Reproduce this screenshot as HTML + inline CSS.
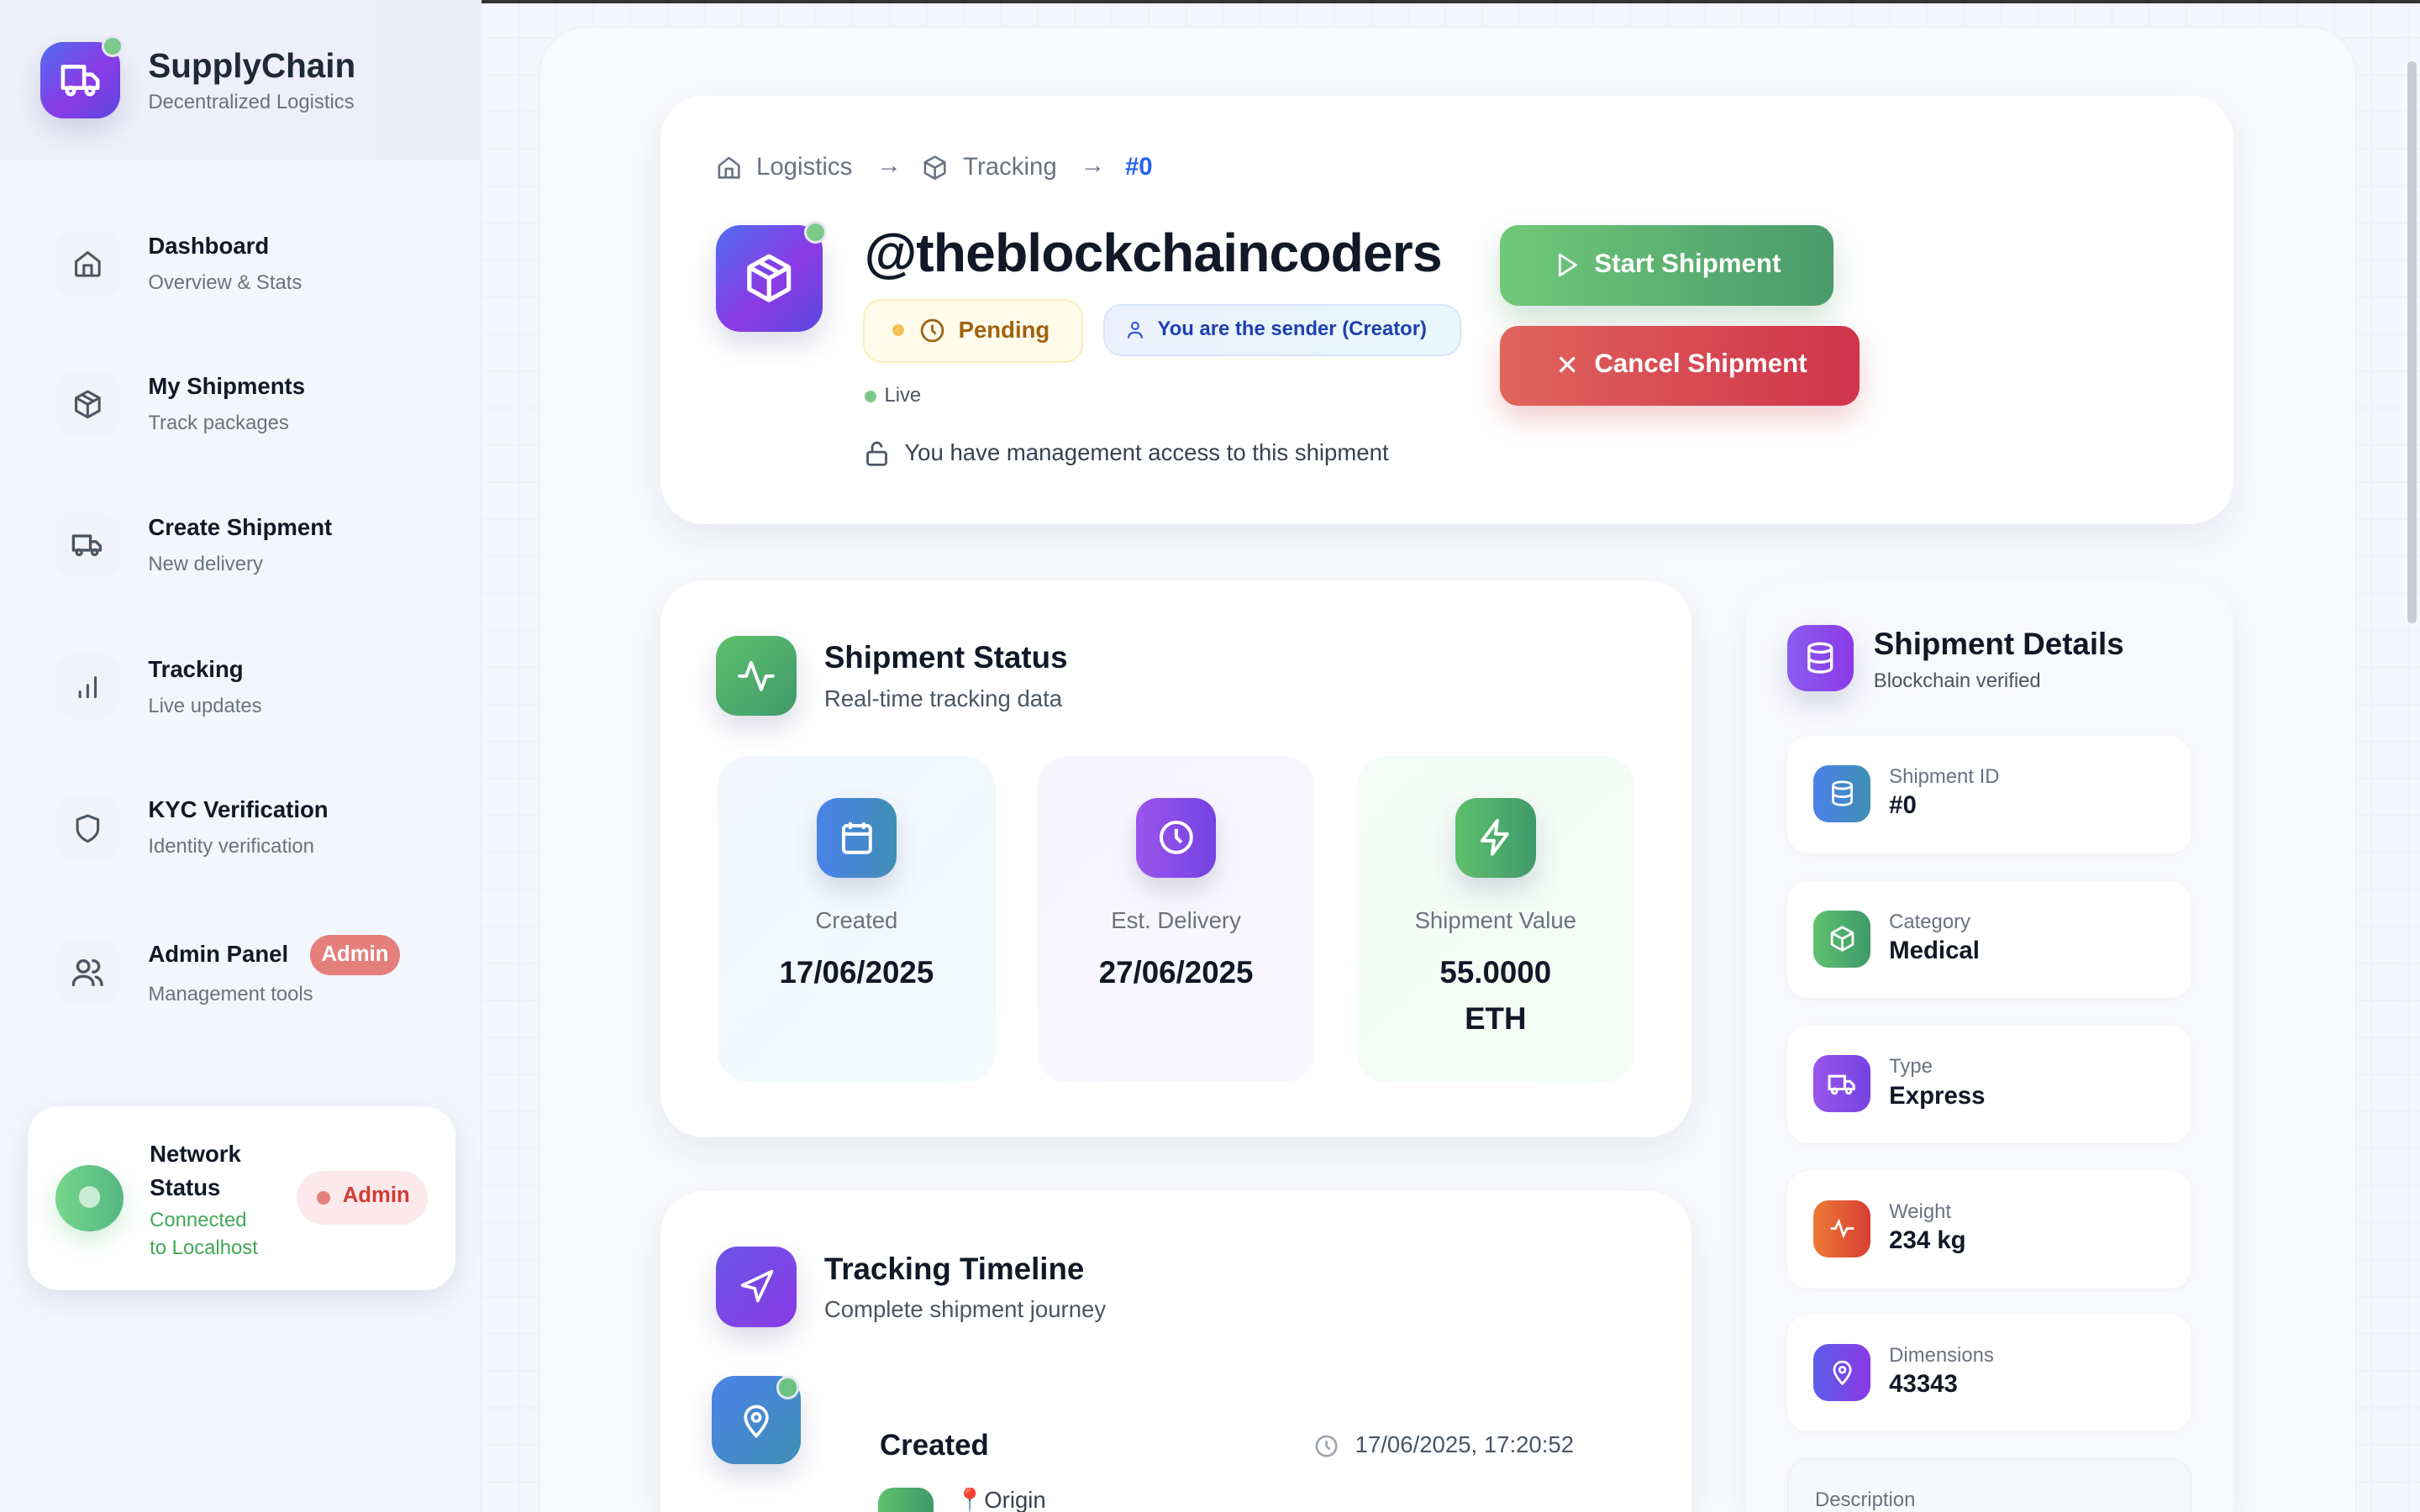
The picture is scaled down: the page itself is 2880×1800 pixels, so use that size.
<!DOCTYPE html>
<html><head><meta charset="utf-8"><style>
*{box-sizing:border-box;margin:0;padding:0}
html,body{width:1568px;height:980px;overflow:hidden}
body{zoom:1.836735;font-family:"Liberation Sans",sans-serif;background:#f5f7fc;position:relative;color:#111827}
.a{position:absolute}
.sb{left:0;top:0;width:312px;height:980px;background:#f3f6fc;border-right:1px solid #e3e8f3}
.sbh{left:0;top:0;width:312px;height:104px;background:linear-gradient(90deg,#eef1fb,#eeeefb)}
.ib{width:42px;height:42px;border-radius:12px;background:#f0f3f9;display:flex;align-items:center;justify-content:center}
.t{font-weight:bold;font-size:15px;color:#111827}
.s{font-size:13px;color:#6b7280}
.card{background:#fff;border-radius:28px;box-shadow:0 8px 24px rgba(30,40,80,.08)}
svg{display:block}
.grad{display:flex;align-items:center;justify-content:center;box-shadow:0 8px 16px rgba(60,60,120,.18)}
.det{left:1158px;width:262px;height:76px;background:#fff;border-radius:14px;box-shadow:0 1px 4px rgba(0,0,0,.03)}
.det .grad{position:absolute;left:17px;top:19px;width:37px;height:37px;border-radius:10px;box-shadow:none}
.det .l{position:absolute;left:66px;top:19px;font-size:13px;color:#6b7280}
.det .v{position:absolute;left:66px;top:36px;font-size:16px;font-weight:bold;color:#111827}
.stat{top:490px;width:180px;height:211px;border-radius:20px;text-align:center}
.stat .grad{position:absolute;left:64px;top:27px;width:52px;height:52px;border-radius:14px}
.stat .l{position:absolute;left:0;right:0;top:98px;font-size:15px;color:#6b7280}
.stat .v{position:absolute;left:0;right:0;top:125px;font-size:20px;font-weight:bold;line-height:30px}
</style></head><body>
<div class="a" style="left:312px;top:0;width:1256px;height:980px;background-image:linear-gradient(#f0f2f8 1px,transparent 1px),linear-gradient(90deg,#f0f2f8 1px,transparent 1px);background-size:24px 24px"></div>
<div class="a" style="left:0;top:0;width:1568px;height:2px;background:#333"></div>

<div class="a sb"></div>
<div class="a sbh"></div>
<div class="a grad" style="left:26px;top:27px;width:52px;height:50px;border-radius:15px;background:linear-gradient(135deg,#4f6ef0,#8b3ae6 55%,#5a48e0)">
<svg width="30" height="30" viewBox="0 0 24 24" fill="none" stroke="#fff" stroke-width="2" stroke-linecap="round" stroke-linejoin="round"><path d="M3 5h11v11H3zM14 9h4l3 3v4h-7"/><circle cx="7" cy="17.5" r="1.8"/><circle cx="17" cy="17.5" r="1.8"/></svg></div>
<div class="a" style="left:66px;top:23px;width:14px;height:14px;border-radius:50%;background:#7cc98a;border:2px solid #e6e8f6"></div>
<div class="a" style="left:96px;top:30px;font-size:22px;font-weight:bold;color:#1f2937">SupplyChain</div>
<div class="a" style="left:96px;top:59px;font-size:13px;color:#6b7280">Decentralized Logistics</div>

<div class="a ib" style="left:36px;top:150px"><svg width="20" height="20" viewBox="0 0 24 24" fill="none" stroke="#4b5563" stroke-width="2" stroke-linejoin="round"><path d="M3 10l9-7 9 7v10a1 1 0 0 1-1 1H4a1 1 0 0 1-1-1z"/><path d="M9 21v-8h6v8"/></svg></div>
<div class="a t" style="left:96px;top:151px">Dashboard</div><div class="a s" style="left:96px;top:176px">Overview &amp; Stats</div>
<div class="a ib" style="left:36px;top:241px"><svg width="20" height="20" viewBox="0 0 24 24" fill="none" stroke="#4b5563" stroke-width="2" stroke-linejoin="round"><path d="M12 2l9 5v10l-9 5-9-5V7z"/><path d="M3 7l9 5 9-5M12 12v10M7.5 4.5l9 5"/></svg></div>
<div class="a t" style="left:96px;top:242px">My Shipments</div><div class="a s" style="left:96px;top:267px">Track packages</div>
<div class="a ib" style="left:36px;top:332px"><svg width="22" height="22" viewBox="0 0 24 24" fill="none" stroke="#4b5563" stroke-width="2" stroke-linejoin="round"><path d="M2 6h12v10H2zM14 10h4l3 3v3h-7"/><circle cx="6" cy="17.5" r="1.8"/><circle cx="17" cy="17.5" r="1.8"/></svg></div>
<div class="a t" style="left:96px;top:333px">Create Shipment</div><div class="a s" style="left:96px;top:358px">New delivery</div>
<div class="a ib" style="left:36px;top:424px"><svg width="20" height="20" viewBox="0 0 24 24" fill="none" stroke="#4b5563" stroke-width="2" stroke-linecap="round"><path d="M6 20v-4M12 20v-9M18 20V5"/></svg></div>
<div class="a t" style="left:96px;top:425px">Tracking</div><div class="a s" style="left:96px;top:450px">Live updates</div>
<div class="a ib" style="left:36px;top:516px"><svg width="20" height="20" viewBox="0 0 24 24" fill="none" stroke="#4b5563" stroke-width="2" stroke-linejoin="round"><path d="M12 2l8 3v7c0 5-4 8-8 10-4-2-8-5-8-10V5z"/></svg></div>
<div class="a t" style="left:96px;top:516px">KYC Verification</div><div class="a s" style="left:96px;top:541px">Identity verification</div>
<div class="a ib" style="left:36px;top:609px"><svg width="22" height="22" viewBox="0 0 24 24" fill="none" stroke="#4b5563" stroke-width="2" stroke-linecap="round"><circle cx="9" cy="8" r="4"/><path d="M2 21c0-4 3-6 7-6s7 2 7 6M16 4a4 4 0 0 1 0 8M22 21c0-3-2-5-4-5.5"/></svg></div>
<div class="a t" style="left:96px;top:610px">Admin Panel</div><div class="a s" style="left:96px;top:637px">Management tools</div>
<div class="a" style="left:201px;top:606px;width:58px;height:26px;border-radius:13px;background:#e57f7b;color:#fff;font-size:14px;font-weight:bold;text-align:center;line-height:26px">Admin</div>

<div class="a card" style="left:18px;top:717px;width:277px;height:119px;border-radius:20px;box-shadow:0 6px 18px rgba(30,40,80,.1)"></div>
<div class="a" style="left:36px;top:755px;width:44px;height:43px;border-radius:50%;background:linear-gradient(90deg,#76d68b,#55b783);box-shadow:0 6px 14px rgba(80,190,120,.25)"></div>
<div class="a" style="left:51px;top:769px;width:14px;height:14px;border-radius:50%;background:#c9edd4"></div>
<div class="a t" style="left:97px;top:737px;line-height:22px">Network<br>Status</div>
<div class="a" style="left:97px;top:782px;font-size:13px;color:#41a858;line-height:18px">Connected<br>to Localhost</div>
<div class="a" style="left:192px;top:759px;width:85px;height:35px;border-radius:18px;background:#fbe9eb"></div>
<div class="a" style="left:205px;top:772px;width:9px;height:9px;border-radius:50%;background:#e57f7b"></div>
<div class="a" style="left:222px;top:767px;font-size:14px;font-weight:bold;color:#d33a33">Admin</div>

<div class="a" style="left:350px;top:18px;width:1176px;height:962px;border-radius:30px 30px 0 0;background:#f8fafd;box-shadow:0 0 0 1px #eef1f7"></div>

<div class="a card" style="left:428px;top:62px;width:1019px;height:278px"></div>
<svg class="a" style="left:464px;top:100px" width="17" height="17" viewBox="0 0 24 24" fill="none" stroke="#6b7280" stroke-width="2" stroke-linejoin="round"><path d="M3 10l9-7 9 7v11H3z"/><path d="M9 21v-8h6v8"/></svg>
<div class="a" style="left:490px;top:99px;font-size:16px;color:#6b7280">Logistics</div>
<div class="a" style="left:568px;top:98px;font-size:16px;color:#6b7280">→</div>
<svg class="a" style="left:597px;top:100px" width="17" height="17" viewBox="0 0 24 24" fill="none" stroke="#6b7280" stroke-width="2" stroke-linejoin="round"><path d="M12 2l9 5v10l-9 5-9-5V7z"/><path d="M3 7l9 5 9-5M12 12v10"/></svg>
<div class="a" style="left:624px;top:99px;font-size:16px;color:#6b7280">Tracking</div>
<div class="a" style="left:700px;top:98px;font-size:16px;color:#6b7280">→</div>
<div class="a" style="left:729px;top:99px;font-size:16px;font-weight:bold;color:#2563eb">#0</div>

<div class="a grad" style="left:464px;top:146px;width:69px;height:69px;border-radius:16px;background:linear-gradient(135deg,#4f6ef0,#8b3ae6 55%,#5a48e0)">
<svg width="34" height="34" viewBox="0 0 24 24" fill="none" stroke="#fff" stroke-width="2" stroke-linejoin="round"><path d="M12 2l9 5v10l-9 5-9-5V7z"/><path d="M3 7l9 5 9-5M12 12v10M7.5 4.5l9 5"/></svg></div>
<div class="a" style="left:521px;top:143px;width:15px;height:15px;border-radius:50%;background:#7cc98a;border:2px solid #e6e8f6"></div>
<div class="a" style="left:560px;top:144px;font-size:35px;font-weight:bold;color:#111827;letter-spacing:-.5px">@theblockchaincoders</div>
<div class="a" style="left:559px;top:194px;width:143px;height:41px;border-radius:12px;background:#fffbeb;border:1.5px solid #fcefb8"></div>
<div class="a" style="left:578px;top:210px;width:8px;height:8px;border-radius:50%;background:#f1c258"></div>
<svg class="a" style="left:595px;top:205px" width="18" height="18" viewBox="0 0 24 24" fill="none" stroke="#9a6212" stroke-width="2"><circle cx="12" cy="12" r="9"/><path d="M12 7v5l3 3"/></svg>
<div class="a" style="left:621px;top:205px;font-size:15px;font-weight:bold;color:#a1620f">Pending</div>
<div class="a" style="left:715px;top:197px;width:232px;height:34px;border-radius:12px;background:linear-gradient(90deg,#ebf1fd,#e8f8fd);border:1.5px solid #d7e4fb"></div>
<svg class="a" style="left:729px;top:207px" width="13" height="14" viewBox="0 0 24 24" fill="none" stroke="#2b50d8" stroke-width="2"><circle cx="12" cy="7" r="4"/><path d="M4 22c0-5 3-7 8-7s8 2 8 7"/></svg>
<div class="a" style="left:750px;top:206px;font-size:13px;font-weight:bold;color:#1e40af">You are the sender (Creator)</div>
<div class="a" style="left:560px;top:253px;width:8px;height:8px;border-radius:50%;background:#7cc98a"></div>
<div class="a" style="left:573px;top:249px;font-size:13px;color:#4b5563">Live</div>
<svg class="a" style="left:559px;top:284px" width="18" height="19" viewBox="0 0 24 24" fill="none" stroke="#4b5563" stroke-width="2"><rect x="4" y="11" width="16" height="11" rx="2"/><path d="M8 11V7a4 4 0 0 1 8 0"/></svg>
<div class="a" style="left:586px;top:285px;font-size:15px;color:#374151">You have management access to this shipment</div>

<div class="a" style="left:972px;top:146px;width:216px;height:52px;border-radius:12px;background:linear-gradient(90deg,#70c978,#4a9a6c);box-shadow:0 8px 18px rgba(60,140,90,.25)"></div>
<svg class="a" style="left:1006px;top:163px" width="18" height="18" viewBox="0 0 24 24" fill="none" stroke="#fff" stroke-width="2" stroke-linejoin="round"><path d="M6 3l14 9-14 9z"/></svg>
<div class="a" style="left:1033px;top:161px;font-size:17px;font-weight:bold;color:#fff">Start Shipment</div>
<div class="a" style="left:972px;top:211px;width:233px;height:52px;border-radius:12px;background:linear-gradient(90deg,#e0645c,#cf344b);box-shadow:0 8px 18px rgba(200,60,70,.25)"></div>
<div class="a" style="left:1008px;top:226px;font-size:18px;color:#fff">✕</div>
<div class="a" style="left:1033px;top:226px;font-size:17px;font-weight:bold;color:#fff">Cancel Shipment</div>

<div class="a card" style="left:428px;top:376px;width:668px;height:361px"></div>
<div class="a grad" style="left:464px;top:412px;width:52px;height:52px;border-radius:14px;background:linear-gradient(135deg,#5fc06c,#3f9a6b)"><svg width="26" height="26" viewBox="0 0 24 24" fill="none" stroke="#fff" stroke-width="2" stroke-linecap="round" stroke-linejoin="round"><path d="M2 12h4l3-8 6 16 3-8h4"/></svg></div>
<div class="a" style="left:534px;top:415px;font-size:20px;font-weight:bold">Shipment Status</div>
<div class="a" style="left:534px;top:444px;font-size:15px;color:#4b5563">Real-time tracking data</div>

<div class="a stat" style="left:465px;background:linear-gradient(135deg,#f3f7fd,#f2fbfd)"><div class="grad" style="background:linear-gradient(90deg,#4b82ea,#3f8fb5)"><svg width="26" height="26" viewBox="0 0 24 24" fill="none" stroke="#fff" stroke-width="2"><rect x="4" y="5" width="16" height="16" rx="2"/><path d="M4 10h16M8 3v4M16 3v4"/></svg></div><div class="l">Created</div><div class="v">17/06/2025</div></div>
<div class="a stat" style="left:672px;background:linear-gradient(135deg,#f8f6fd,#f9f7fe)"><div class="grad" style="background:linear-gradient(90deg,#9b55ec,#7443e2)"><svg width="26" height="26" viewBox="0 0 24 24" fill="none" stroke="#fff" stroke-width="2"><circle cx="12" cy="12" r="9"/><path d="M12 7v5l3 3"/></svg></div><div class="l">Est. Delivery</div><div class="v">27/06/2025</div></div>
<div class="a stat" style="left:879px;background:linear-gradient(135deg,#f5fbf7,#f3fcf5)"><div class="grad" style="background:linear-gradient(90deg,#5fc06c,#3f9a6b)"><svg width="26" height="26" viewBox="0 0 24 24" fill="none" stroke="#fff" stroke-width="2" stroke-linejoin="round"><path d="M13 2L4 14h7l-1 8 9-12h-7z"/></svg></div><div class="l">Shipment Value</div><div class="v">55.0000<br>ETH</div></div>

<div class="a card" style="left:428px;top:772px;width:668px;height:208px;border-radius:28px 28px 0 0"></div>
<div class="a grad" style="left:464px;top:808px;width:52px;height:52px;border-radius:14px;background:linear-gradient(135deg,#6a55e6,#8b3ae6)"><svg width="24" height="24" viewBox="0 0 24 24" fill="none" stroke="#fff" stroke-width="2" stroke-linejoin="round"><path d="M3 11l19-9-9 19-2-8z"/></svg></div>
<div class="a" style="left:534px;top:811px;font-size:20px;font-weight:bold">Tracking Timeline</div>
<div class="a" style="left:534px;top:840px;font-size:15px;color:#4b5563">Complete shipment journey</div>
<div class="a grad" style="left:461px;top:892px;width:58px;height:57px;border-radius:15px;background:linear-gradient(135deg,#4b82ea,#3f8fb5)"><svg width="24" height="24" viewBox="0 0 24 24" fill="none" stroke="#fff" stroke-width="2"><path d="M12 22s7-7 7-12a7 7 0 0 0-14 0c0 5 7 12 7 12z"/><circle cx="12" cy="10" r="2.5"/></svg></div>
<div class="a" style="left:503px;top:892px;width:15px;height:15px;border-radius:50%;background:#6dc182;border:2px solid #dde8ef"></div>
<div class="a" style="left:570px;top:926px;font-size:19px;font-weight:bold">Created</div>
<svg class="a" style="left:851px;top:929px" width="17" height="17" viewBox="0 0 24 24" fill="none" stroke="#9ca3af" stroke-width="2"><circle cx="12" cy="12" r="9"/><path d="M12 7v5l3 3"/></svg>
<div class="a" style="left:878px;top:928px;font-size:15px;color:#4b5563">17/06/2025, 17:20:52</div>
<div class="a" style="left:569px;top:964px;width:36px;height:16px;border-radius:10px 10px 0 0;background:linear-gradient(90deg,#5fc06c,#3f9a6b)"></div>
<div class="a" style="left:619px;top:964px;font-size:15px;line-height:16px;height:16px;overflow:hidden;color:#374151"><span style="color:#d33a33">📍</span>Origin</div>

<div class="a" style="left:1131px;top:376px;width:316px;height:604px;border-radius:28px 28px 0 0;background:#f8f9fd;box-shadow:0 8px 24px rgba(30,40,80,.06)"></div>
<div class="a grad" style="left:1158px;top:405px;width:43px;height:43px;border-radius:13px;background:linear-gradient(90deg,#8b5cf0,#8b3ae6)"><svg width="22" height="22" viewBox="0 0 24 24" fill="none" stroke="#fff" stroke-width="2"><ellipse cx="12" cy="5" rx="8" ry="3"/><path d="M4 5v14c0 1.7 3.6 3 8 3s8-1.3 8-3V5M4 12c0 1.7 3.6 3 8 3s8-1.3 8-3"/></svg></div>
<div class="a" style="left:1214px;top:406px;font-size:20px;font-weight:bold">Shipment Details</div>
<div class="a" style="left:1214px;top:434px;font-size:13px;color:#4b5563">Blockchain verified</div>

<div class="a det" style="top:477px"><div class="grad" style="background:linear-gradient(90deg,#4b82ea,#3f8fb5)"><svg width="18" height="18" viewBox="0 0 24 24" fill="none" stroke="#fff" stroke-width="2"><ellipse cx="12" cy="5" rx="8" ry="3"/><path d="M4 5v14c0 1.7 3.6 3 8 3s8-1.3 8-3V5M4 12c0 1.7 3.6 3 8 3s8-1.3 8-3"/></svg></div><div class="l">Shipment ID</div><div class="v">#0</div></div>
<div class="a det" style="top:571px"><div class="grad" style="background:linear-gradient(90deg,#5fc06c,#3f9a6b)"><svg width="18" height="18" viewBox="0 0 24 24" fill="none" stroke="#fff" stroke-width="2" stroke-linejoin="round"><path d="M12 2l9 5v10l-9 5-9-5V7z"/><path d="M3 7l9 5 9-5M12 12v10"/></svg></div><div class="l">Category</div><div class="v">Medical</div></div>
<div class="a det" style="top:665px"><div class="grad" style="background:linear-gradient(90deg,#9b55ec,#7443e2)"><svg width="20" height="20" viewBox="0 0 24 24" fill="none" stroke="#fff" stroke-width="2"><path d="M2 6h12v10H2zM14 10h4l3 3v3h-7"/><circle cx="6" cy="17.5" r="1.8"/><circle cx="17" cy="17.5" r="1.8"/></svg></div><div class="l">Type</div><div class="v">Express</div></div>
<div class="a det" style="top:759px"><div class="grad" style="background:linear-gradient(90deg,#ec7a34,#d63f35)"><svg width="18" height="18" viewBox="0 0 24 24" fill="none" stroke="#fff" stroke-width="2"><path d="M2 12h4l3-6 4 12 3-6h6"/></svg></div><div class="l">Weight</div><div class="v">234 kg</div></div>
<div class="a det" style="top:852px"><div class="grad" style="background:linear-gradient(90deg,#5c5ee8,#8b3ae6)"><svg width="18" height="18" viewBox="0 0 24 24" fill="none" stroke="#fff" stroke-width="2"><path d="M12 22s7-7 7-12a7 7 0 0 0-14 0c0 5 7 12 7 12z"/><circle cx="12" cy="10" r="2.5"/></svg></div><div class="l">Dimensions</div><div class="v">43343</div></div>
<div class="a" style="left:1158px;top:945px;width:262px;height:35px;border-radius:14px 14px 0 0;background:#f7f8fb;border:1px solid #e8ebf1;border-bottom:none"></div>
<div class="a" style="left:1176px;top:964px;font-size:13px;line-height:16px;color:#6b7280">Description</div>

<div class="a" style="left:1560px;top:40px;width:6px;height:364px;border-radius:3px;background:#c9ccd3"></div>
</body></html>
